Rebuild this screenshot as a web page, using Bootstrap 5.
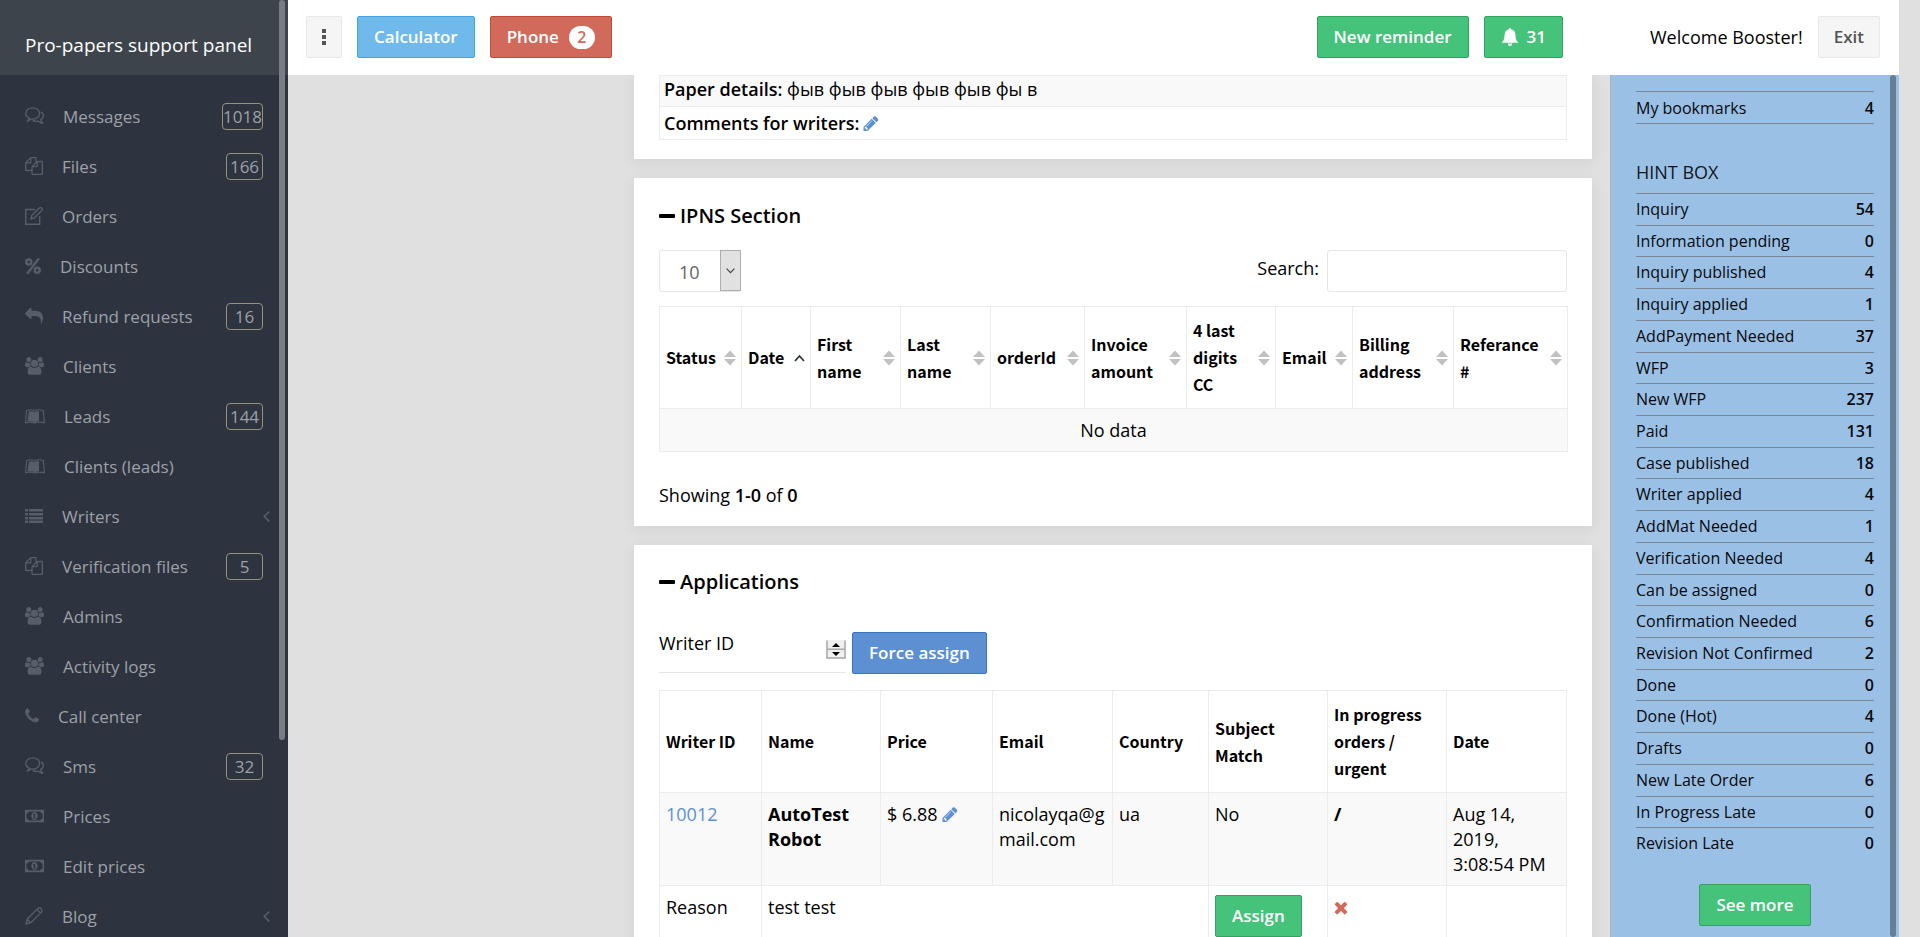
<!DOCTYPE html>
<html lang="en">
<head>
<meta charset="utf-8">
<meta name="viewport" content="width=device-width, initial-scale=1">
<title>Pro-papers support panel</title>
<link href="https://cdn.jsdelivr.net/npm/bootstrap@5.3.0/dist/css/bootstrap.min.css" rel="stylesheet">
<style>
  body { font-family: "Open Sans", "Noto Sans", sans-serif; font-size: 18px; line-height: 25px; color: #000; background: #e0e0e0; }
  a { text-decoration: none; color: #5c90d2; }
  svg { display: block; fill: currentColor; flex: none; }

  /* left navigation */
  .side { width: 288px; flex: none; background: #2d333f; color: #9da1a6; position: relative; }
  .side-brand { height: 75px; padding: 17px 25px 0; background: #3e444c; color: #fff; font-size: 19px; }
  .side-menu { padding-top: 16px; }
  .side-menu a { height: 50px; padding: 0 25px; color: #9da1a6; font-size: 17px; gap: 19px; }
  .side-menu svg { height: 18px; color: #575e67; }
  .side-menu .chev { margin-right: -7px; height: 11px; }
  .pill-count { min-width: 37px; height: 27px; border: 1px solid #94917f; border-radius: 4px; text-align: center; font-size: 17px; }
  .thumb { position: absolute; width: 6px; border-radius: 3px; top: 0; }
  .thumb-side { right: 3px; height: 79%; background: #797d83; }
  .thumb-hint { right: 3px; height: 100%; background: #667e96; }

  /* top bar */
  .topbar { height: 75px; padding: 16px 19px 0 18px; gap: 15px; background: #fff; }
  .btn { --bs-btn-border-radius: 2px; --bs-btn-padding-x: 16px; --bs-btn-padding-y: 7px; --bs-btn-font-size: 17px; --bs-btn-font-weight: 600; --bs-btn-line-height: 26px; --bs-btn-color: #fff; }
  .btn-pale { --bs-btn-padding-x: 15px; --bs-btn-color: #545454; --bs-btn-bg: #f5f5f5; --bs-btn-border-color: #e9e9e9; }
  .btn-sky { --bs-btn-bg: #70b9eb; --bs-btn-border-color: #43a3e5; }
  .btn-brick { --bs-btn-bg: #d26a5c; --bs-btn-border-color: #c54736; gap: 10px; }
  .btn-leaf { --bs-btn-bg: #46c37b; --bs-btn-border-color: #34a263; }
  .btn-blue { --bs-btn-bg: #5c90d2; --bs-btn-border-color: #3675c5; }
  .phone-count { width: 26px; height: 23px; border-radius: 12px; background: #fff; color: #d26a5c; font-size: 16px; line-height: 23px; }
  .welcome { padding: 9px 0 0 72px; }

  /* page blocks */
  main { margin: 0 2px; }
  .main-col { gap: 19px; min-width: 0; }
  .gutter-col { flex: 0 0 328px; }
  .block { background: #fff; padding: 0 25px; box-shadow: 0 3px 14px rgba(0,0,0,.07); }
  .block h3 { font-size: 20px; font-weight: 600; line-height: 26px; gap: 5px; margin: 0; }
  .first-block { padding-bottom: 19px; }
  .ipns { padding-top: 25px; padding-bottom: 18px; }
  .apps { padding-top: 24px; }
  .tools { margin: 21px 0 14px; }
  .tools label { padding-top: 6px; }
  .showing { margin: 31px 0 0; }
  .assign-row { gap: 6px; margin: 37px 0 16px; }
  .grid-table { --bs-table-bg: transparent; color: #000; table-layout: fixed; width: 100%; border: 1px solid #ececec; margin: 0; }
  .grid-table th, .grid-table td { border: 1px solid #ececec; padding: 9px 6px 8px; box-shadow: none; overflow-wrap: anywhere; color: #000; }
  .grid-table th { font-family: "Noto Sans CJK JP", "Open Sans", sans-serif; font-weight: 700; font-size: 16px; line-height: 27px; height: 102px; vertical-align: middle; padding: 10px 5px 10px 6px; overflow-wrap: normal; }
  .grid-table .shaded > td { background: #f9f9f9; }
  .facts tr td { padding: 3px 4px; height: 33px; }
  .facts tr:first-child td { padding: 1px 4px 4px; height: 30px; }
  .sortable svg { color: #c1c1c1; }
  .sortable .sorted { color: #333; }
  .cross { color: #d26a5c; }
  .field { height: 42px; border: 1px solid #e6e6e6; border-radius: 3px; background: #fff; }
  .select-wrap { position: relative; width: 82px; }
  .select-wrap select { appearance: none; width: 100%; padding: 2px 0 0 19px; color: #646464; }
  .select-arrow { position: absolute; right: 0; top: 0; width: 21px; height: 41px; background: #e1e1e1; border: 1px solid #adadad; pointer-events: none; color: #444; }
  .search-input { width: 240px; }
  .writer-field { position: relative; width: 187px; height: 41px; }
  .writer-field input { appearance: textfield; width: 100%; height: 41px; border: 0; border-bottom: 1px solid #e6e6e6; background: transparent; }
  .writer-field input::-webkit-inner-spin-button { appearance: none; }
  .writer-field label { position: absolute; left: 0; top: 0; line-height: 23px; }
  .spin { position: absolute; right: 0; top: 8px; }

  /* hint column */
  .hint { width: 289px; flex: none; position: relative; background: #9bc0e6; border-left: 1px solid #aeb2b8; padding: 16px 25px 0 25px; font-size: 16px; line-height: 22px; }
  .hint h4 { font-size: 18px; font-weight: 500; line-height: 24px; color: #10161c; margin: 36px 0 9px; }
  .hint-row { border-top: 1px solid #7d8796; color: #06090c; padding-top: 4px; }
  .hint-row b { font-weight: 600; }
  .hint-list { display: grid; grid-auto-rows: 1fr; min-height: 666px; }
  .bookmarks { border-bottom: 1px solid #7d8796; height: 33px; padding-top: 5px; }
  .see-more { padding-top: 25px; }
  .edge { width: 21px; flex: none; background: #e0e0e0; }
</style>
</head>
<body>
<svg width="0" height="0" class="position-absolute" aria-hidden="true">
  <symbol id="i-comments" viewBox="0 0 19 18"><path d="M4.300 11.200C2 10.200.8 8.500.8 6.500.8 3.300 3.800.9 7.700.9s6.900 2.400 6.900 5.600-3 5.600-6.900 5.600q-.9 0-1.900-.2Q4.200 13.600 2.300 14q1.500-1.400 2-2.800zM16 4.800c1.600.9 2.400 2.100 2.400 3.600 0 1.700-1 3.200-2.800 4.100q.5 2 2.200 3.700-2.700-.3-4.400-2-3 .5-5.700-.7" fill="none" stroke="currentColor" stroke-width="1.400" stroke-linejoin="round"/></symbol>
  <symbol id="i-files" viewBox="0 0 1792 1792"><path d="M1696 384q40 0 68 28t28 68v1216q0 40-28 68t-68 28h-960q-40 0-68-28t-28-68v-288h-544q-40 0-68-28t-28-68v-672q0-40 20-88t48-76l408-408q28-28 76-48t88-20h416q40 0 68 28t28 68v328q68-40 128-40h416zm-544 213l-299 299h299v-299zm-640-384l-299 299h299v-299zm196 647l316-316v-416h-384v416q0 40-28 68t-68 28h-416v640h512v-256q0-40 20-88t48-76zm956 804v-1152h-384v416q0 40-28 68t-68 28h-416v640h896z"/></symbol>
  <symbol id="i-edit" viewBox="0 0 18 18"><path d="M10 2.500H.7v14.700h14V9M6 12l.8-3.600L14.500.9q1.300-.7 2.200.2t.2 2.200L9.300 11z" fill="none" stroke="currentColor" stroke-width="1.400"/></symbol>
  <symbol id="i-percent" viewBox="0 0 16 18"><circle cx="3.800" cy="5" r="2.500" fill="none" stroke="currentColor" stroke-width="2.500"/><circle cx="12.200" cy="13.200" r="2.500" fill="none" stroke="currentColor" stroke-width="2.500"/><path d="M12.500 1.800h2L3.500 16.400h-2z" stroke="currentColor" stroke-width="1"/></symbol>
  <symbol id="i-reply" viewBox="0 0 1792 1792"><path d="M1792 1120q0 166-127 451-3 7-10.500 24t-13.500 30-13 22q-12 17-28 17-15 0-23.500-10t-8.500-25q0-9 2.500-26.500t2.500-23.500q5-68 5-123 0-101-17.500-181t-48.500-138.500-80-101-105.500-69.500-133-42.500-154-21.500-175.500-6h-224v256q0 26-19 45t-45 19-45-19l-512-512q-19-19-19-45t19-45l512-512q19-19 45-19t45 19 19 45v256h224q713 0 875 403 53 134 53 333z"/></symbol>
  <symbol id="i-users" viewBox="0 60 1920 1680"><path d="M593 896q-162 5-265 128h-134q-82 0-138-40.500t-56-118.500q0-353 124-353 6 0 43.500 21t97.500 42.500 119 21.500q67 0 133-23-5 37-5 66 0 139 81 256zm1071 637q0 120-73 189.500t-194 69.500h-874q-121 0-194-69.500t-73-189.500q0-53 3.500-103.500t14-109 26.500-108.500 43-97.500 62-81 85.500-53.500 111.500-20q10 0 43 21.500t73 48 107 48 135 21.500 135-21.500 107-48 73-48 43-21.500q61 0 111.500 20t85.500 53.500 62 81 43 97.500 26.500 108.500 14 109 3.500 103.500zm-1024-1277q0 106-75 181t-181 75-181-75-75-181 75-181 181-75 181 75 75 181zm704 384q0 159-112.500 271.500t-271.500 112.500-271.500-112.500-112.500-271.500 112.500-271.500 271.500-112.500 271.500 112.500 112.500 271.500zm576 225q0 78-56 118.500t-138 40.500h-134q-103-123-265-128 81-117 81-256 0-29-5-66 66 23 133 23 59 0 119-21.500t97.500-42.500 43.500-21q124 0 124 353zm-128-609q0 106-75 181t-181 75-181-75-75-181 75-181 181-75 181 75 75 181z"/></symbol>
  <symbol id="i-book" viewBox="0 0 21 18"><path d="M1.700 3.300Q6.500 1.500 10.500 3.500q4-2 8.700-.2L20.400 16q-5.400-1.400-9.900.4Q6 14.600.6 16z" fill="none" stroke="currentColor" stroke-width="1.200"/><path d="M4 4.400q3.500-1 6.500.5 2-1 4.200-1.100V14.600q-2.300.1-4.200.9Q7 14 2.700 14.700z"/></symbol>
  <symbol id="i-list" viewBox="0 0 18 18"><path d="M0 2h3v2.500H0zM4 2h14v2.500H4zM0 6h3v2.500H0zM4 6h14v2.500H4zM0 10h3v2.500H0zM4 10h14v2.500H4zM0 13.500h3V16H0zM4 13.500h14V16H4z"/></symbol>
  <symbol id="i-phone" viewBox="192 192 1408 1408"><path d="M1600 1240q0 27-10 70.500t-21 68.500q-21 50-122 106-94 51-186 51-27 0-53-3.500t-57.500-12.500-47-14.500-55.500-20.500-49-18q-98-35-175-83-127-79-264-216t-216-264q-48-77-83-175-3-9-18-49t-20.500-55.500-14.500-47-12.500-57.500-3.500-53q0-92 51-186 56-101 106-122 25-11 68.500-21t70.500-10q14 0 21 3 18 6 53 76 11 19 30 54t35 63.500 31 53.500q3 4 17.500 25t21.500 35.500 7 28.500q0 20-28.500 50t-62 55-62 53-28.500 46q0 9 5 22.500t8.500 20.500 14 24 11.500 19q76 137 174 235t235 174q2 1 19 11.500t24 14 20.500 8.500 22.500 5q18 0 46-28.500t53-62 55-62 50-28.500q14 0 28.500 7t35.500 21.500 25 17.500q25 15 53.500 31t63.500 35 54 30q70 35 76 53 3 7 3 21z"/></symbol>
  <symbol id="i-money" viewBox="0 0 20 18"><path fill-rule="evenodd" d="M0 2.500h20v13H0zM4 4.200Q3.600 6.200 1.500 6.500v5q2.100.3 2.500 2.300h12q.4-2 2.500-2.300v-5Q16.400 6.200 16 4.200zM10 4.800c2 0 3.300 2 3.300 4.200S12 13.200 10 13.200 6.700 11.200 6.700 9 8 4.800 10 4.800zM8.500 7.300v1h.8v2.500h-.9v.9h3.200v-.9h-.9V6.500h-.9z"/></symbol>
  <symbol id="i-blog" viewBox="0 0 18 18"><path d="M1 17l1.200-4.800L13.300 1.100q1.300-.9 2.800.6t.7 2.900L5.700 15.700zM12 2.500l3.500 3.500M2.200 12.200l3.500 3.500" fill="none" stroke="currentColor" stroke-width="1.300"/></symbol>
  <symbol id="i-chev" viewBox="0 0 7 11"><path d="M6.300.6L1.200 5.500l5.100 4.900" fill="none" stroke="currentColor" stroke-width="1.600"/></symbol>
  <symbol id="i-pencil" viewBox="128 128 1536 1536"><path d="M491 1536l91-91-235-235-91 91v107h128v128h107zm523-928q0-22-22-22-10 0-17 7l-542 542q-7 7-7 17 0 22 22 22 10 0 17-7l542-542q7-7 7-17zm-54-192l416 416-832 832h-416v-416zm683 96q0 53-37 90l-166 166-416-416 166-165q36-38 90-38 53 0 91 38l235 234q37 39 37 91z"/></symbol>
  <symbol id="i-sort" viewBox="0 0 12 16"><path d="M6 .6l6 6.400H0zM6 15.400L0 9h12z"/></symbol>
</svg>

<div class="d-flex vh-100 overflow-hidden">
  <aside class="side overflow-hidden">
    <div class="side-brand"><div class="pt-3 text-nowrap">Pro-papers support panel</div></div>
    <nav class="side-menu d-flex flex-column">
      <a href="#" class="d-flex align-items-center"><svg width="19"><use href="#i-comments"/></svg>Messages<span class="pill-count ms-auto">1018</span></a>
      <a href="#" class="d-flex align-items-center"><svg width="18"><use href="#i-files"/></svg>Files<span class="pill-count ms-auto">166</span></a>
      <a href="#" class="d-flex align-items-center"><svg width="18"><use href="#i-edit"/></svg>Orders</a>
      <a href="#" class="d-flex align-items-center"><svg width="16"><use href="#i-percent"/></svg>Discounts</a>
      <a href="#" class="d-flex align-items-center"><svg width="18"><use href="#i-reply"/></svg>Refund requests<span class="pill-count ms-auto">16</span></a>
      <a href="#" class="d-flex align-items-center"><svg width="19"><use href="#i-users"/></svg>Clients</a>
      <a href="#" class="d-flex align-items-center"><svg width="20"><use href="#i-book"/></svg>Leads<span class="pill-count ms-auto">144</span></a>
      <a href="#" class="d-flex align-items-center"><svg width="20"><use href="#i-book"/></svg>Clients (leads)</a>
      <a href="#" class="d-flex align-items-center"><svg width="18"><use href="#i-list"/></svg>Writers<svg width="7" class="chev ms-auto"><use href="#i-chev"/></svg></a>
      <a href="#" class="d-flex align-items-center"><svg width="18"><use href="#i-files"/></svg>Verification files<span class="pill-count ms-auto">5</span></a>
      <a href="#" class="d-flex align-items-center"><svg width="19"><use href="#i-users"/></svg>Admins</a>
      <a href="#" class="d-flex align-items-center"><svg width="19"><use href="#i-users"/></svg>Activity logs</a>
      <a href="#" class="d-flex align-items-center"><svg width="14"><use href="#i-phone"/></svg>Call center</a>
      <a href="#" class="d-flex align-items-center"><svg width="19"><use href="#i-comments"/></svg>Sms<span class="pill-count ms-auto">32</span></a>
      <a href="#" class="d-flex align-items-center"><svg width="19"><use href="#i-money"/></svg>Prices</a>
      <a href="#" class="d-flex align-items-center"><svg width="19"><use href="#i-money"/></svg>Edit prices</a>
      <a href="#" class="d-flex align-items-center"><svg width="18"><use href="#i-blog"/></svg>Blog<svg width="7" class="chev ms-auto"><use href="#i-chev"/></svg></a>
    </nav>
    <span class="thumb thumb-side"></span>
  </aside>

  <div class="d-flex flex-column flex-grow-1 overflow-hidden">
    <header class="topbar d-flex align-items-start flex-shrink-0">
      <button type="button" class="btn btn-pale" aria-label="Menu"><svg width="4" height="26" viewBox="0 0 4 26"><path d="M0 5h4v4H0zM0 11h4v4H0zM0 17h4v4H0z"/></svg></button>
      <button type="button" class="btn btn-sky">Calculator</button>
      <button type="button" class="btn btn-brick d-flex align-items-center">Phone<span class="phone-count">2</span></button>
      <button type="button" class="btn btn-leaf ms-auto">New reminder</button>
      <button type="button" class="btn btn-leaf d-flex align-items-center gap-2"><svg width="18" height="18" viewBox="0 0 18 18"><path d="M9 0q1 0 1 1.200c3 .6 4.500 3 4.500 6 0 4 1.200 6 3 7.500H.5c1.800-1.500 3-3.500 3-7.500 0-3 1.500-5.400 4.500-6Q8 0 9 0zM6.800 15.400h4.400Q11 18 9 18t-2.200-2.600z"/></svg>31</button>
      <span class="welcome text-nowrap">Welcome Booster!</span>
      <button type="button" class="btn btn-pale">Exit</button>
    </header>

    <div class="d-flex flex-grow-1 overflow-hidden">
      <main class="d-flex flex-grow-1 overflow-hidden pe-3">
        <div class="gutter-col"></div>
        <div class="flex-grow-1 ps-3 d-flex flex-column main-col">
          <section class="block first-block">
            <table class="grid-table facts">
              <tr class="shaded"><td class="border-top-0"><b class="fw-semibold">Paper details:</b> фыв фыв фыв фыв фыв фы в</td></tr>
              <tr><td><div class="d-flex align-items-center gap-1"><b class="fw-semibold">Comments for writers:</b><a href="#" aria-label="Edit comments"><svg width="16" height="15"><use href="#i-pencil"/></svg></a></div></td></tr>
            </table>
          </section>

          <section class="block ipns">
            <h3 class="d-flex align-items-center"><svg width="16" height="4" viewBox="0 0 16 4"><rect width="16" height="4" rx="1"/></svg>IPNS Section</h3>
            <div class="d-flex justify-content-between tools">
              <div class="select-wrap">
                <select class="field" aria-label="Rows per page"><option>10</option></select>
                <span class="select-arrow d-flex align-items-center justify-content-center"><svg width="9" height="6" viewBox="0 0 9 6"><path d="M.6.600l3.900 4 3.900-4" fill="none" stroke="currentColor" stroke-width="1.200"/></svg></span>
              </div>
              <div class="d-flex align-items-start gap-2"><label for="q">Search:</label><input id="q" type="text" class="field search-input"></div>
            </div>
            <table class="grid-table">
              <colgroup><col style="width:82px"><col style="width:69px"><col style="width:90px"><col style="width:90px"><col style="width:94px"><col style="width:102px"><col style="width:89px"><col style="width:77px"><col style="width:101px"><col style="width:114px"></colgroup>
              <thead><tr>
                <th><div class="sortable d-flex align-items-center justify-content-between">Status<svg width="12" height="16"><use href="#i-sort"/></svg></div></th>
                <th><div class="sortable d-flex align-items-center justify-content-between">Date<svg class="sorted" width="11" height="8" viewBox="0 0 11 8"><path d="M1 7l4.500-5L10 7" fill="none" stroke="currentColor" stroke-width="1.800"/></svg></div></th>
                <th><div class="sortable d-flex align-items-center justify-content-between">First<br>name<svg width="12" height="16"><use href="#i-sort"/></svg></div></th>
                <th><div class="sortable d-flex align-items-center justify-content-between">Last<br>name<svg width="12" height="16"><use href="#i-sort"/></svg></div></th>
                <th><div class="sortable d-flex align-items-center justify-content-between">orderId<svg width="12" height="16"><use href="#i-sort"/></svg></div></th>
                <th><div class="sortable d-flex align-items-center justify-content-between">Invoice amount<svg width="12" height="16"><use href="#i-sort"/></svg></div></th>
                <th><div class="sortable d-flex align-items-center justify-content-between">4 last digits CC<svg width="12" height="16"><use href="#i-sort"/></svg></div></th>
                <th><div class="sortable d-flex align-items-center justify-content-between">Email<svg width="12" height="16"><use href="#i-sort"/></svg></div></th>
                <th><div class="sortable d-flex align-items-center justify-content-between">Billing address<svg width="12" height="16"><use href="#i-sort"/></svg></div></th>
                <th><div class="sortable d-flex align-items-center justify-content-between">Referance #<svg width="12" height="16"><use href="#i-sort"/></svg></div></th>
              </tr></thead>
              <tbody><tr class="shaded"><td colspan="10" class="text-center">No data</td></tr></tbody>
            </table>
            <p class="showing">Showing <b class="fw-semibold">1-0</b> of <b class="fw-semibold">0</b></p>
          </section>

          <section class="block apps flex-grow-1">
            <h3 class="d-flex align-items-center"><svg width="16" height="4" viewBox="0 0 16 4"><rect width="16" height="4" rx="1"/></svg>Applications</h3>
            <div class="d-flex assign-row">
              <div class="writer-field">
                <label for="wid">Writer ID</label>
                <input id="wid" type="number">
                <svg class="spin" width="20" height="19" viewBox="0 0 20 19"><rect width="20" height="19" fill="#efefef"/><path d="M1 .5v17.500h18V.5M1 9.300h18" fill="none" stroke="#a9a9a9" stroke-width="1.500"/><path d="M6 7l4-4 4 4zM6 12h8l-4 4z" fill="#000"/></svg>
              </div>
              <button type="button" class="btn btn-blue">Force assign</button>
            </div>
            <table class="grid-table">
              <colgroup><col style="width:102px"><col style="width:119px"><col style="width:112px"><col style="width:120px"><col style="width:96px"><col style="width:119px"><col style="width:119px"><col style="width:120px"></colgroup>
              <thead><tr><th>Writer ID</th><th>Name</th><th>Price</th><th>Email</th><th>Country</th><th>Subject Match</th><th>In progress orders / urgent</th><th>Date</th></tr></thead>
              <tbody>
                <tr class="shaded align-top"><td><a href="#">10012</a></td><td><b>AutoTest Robot</b></td><td><div class="d-flex align-items-center gap-1">$ 6.88<a href="#" aria-label="Edit price"><svg width="16" height="15"><use href="#i-pencil"/></svg></a></div></td><td>nicolayqa@gmail.com</td><td>ua</td><td>No</td><td><b>/</b></td><td>Aug 14, 2019, 3:08:54 PM</td></tr>
                <tr class="align-top"><td>Reason</td><td colspan="4">test test</td><td><button type="button" class="btn btn-leaf">Assign</button></td><td><a href="#" class="cross" aria-label="Reject"><svg width="14" height="25" viewBox="302 -300 1188 2392"><path d="M1490 1322q0 40-28 68l-136 136q-28 28-68 28t-68-28l-294-294-294 294q-28 28-68 28t-68-28l-136-136q-28-28-28-68t28-68l294-294-294-294q-28-28-28-68t28-68l136-136q28-28 68-28t68 28l294 294 294-294q28-28 68-28t68 28l136 136q28 28 28 68t-28 68l-294 294 294 294q28 28 28 68z"/></svg></a></td><td></td></tr>
              </tbody>
            </table>
          </section>
        </div>
      </main>

      <aside class="hint">
        <div class="hint-row bookmarks d-flex justify-content-between"><span>My bookmarks</span><b>4</b></div>
        <h4>HINT BOX</h4>
        <div class="hint-list">
          <div class="hint-row d-flex justify-content-between"><span>Inquiry</span><b>54</b></div>
          <div class="hint-row d-flex justify-content-between"><span>Information pending</span><b>0</b></div>
          <div class="hint-row d-flex justify-content-between"><span>Inquiry published</span><b>4</b></div>
          <div class="hint-row d-flex justify-content-between"><span>Inquiry applied</span><b>1</b></div>
          <div class="hint-row d-flex justify-content-between"><span>AddPayment Needed</span><b>37</b></div>
          <div class="hint-row d-flex justify-content-between"><span>WFP</span><b>3</b></div>
          <div class="hint-row d-flex justify-content-between"><span>New WFP</span><b>237</b></div>
          <div class="hint-row d-flex justify-content-between"><span>Paid</span><b>131</b></div>
          <div class="hint-row d-flex justify-content-between"><span>Case published</span><b>18</b></div>
          <div class="hint-row d-flex justify-content-between"><span>Writer applied</span><b>4</b></div>
          <div class="hint-row d-flex justify-content-between"><span>AddMat Needed</span><b>1</b></div>
          <div class="hint-row d-flex justify-content-between"><span>Verification Needed</span><b>4</b></div>
          <div class="hint-row d-flex justify-content-between"><span>Can be assigned</span><b>0</b></div>
          <div class="hint-row d-flex justify-content-between"><span>Confirmation Needed</span><b>6</b></div>
          <div class="hint-row d-flex justify-content-between"><span>Revision Not Confirmed</span><b>2</b></div>
          <div class="hint-row d-flex justify-content-between"><span>Done</span><b>0</b></div>
          <div class="hint-row d-flex justify-content-between"><span>Done (Hot)</span><b>4</b></div>
          <div class="hint-row d-flex justify-content-between"><span>Drafts</span><b>0</b></div>
          <div class="hint-row d-flex justify-content-between"><span>New Late Order</span><b>6</b></div>
          <div class="hint-row d-flex justify-content-between"><span>In Progress Late</span><b>0</b></div>
          <div class="hint-row d-flex justify-content-between"><span>Revision Late</span><b>0</b></div>
        </div>
        <div class="text-center see-more"><button type="button" class="btn btn-leaf">See more</button></div>
        <span class="thumb thumb-hint"></span>
      </aside>
    </div>
  </div>
  <div class="edge"></div>
</div>
<script src="https://cdn.jsdelivr.net/npm/bootstrap@5.3.0/dist/js/bootstrap.bundle.min.js"></script>
</body>
</html>
